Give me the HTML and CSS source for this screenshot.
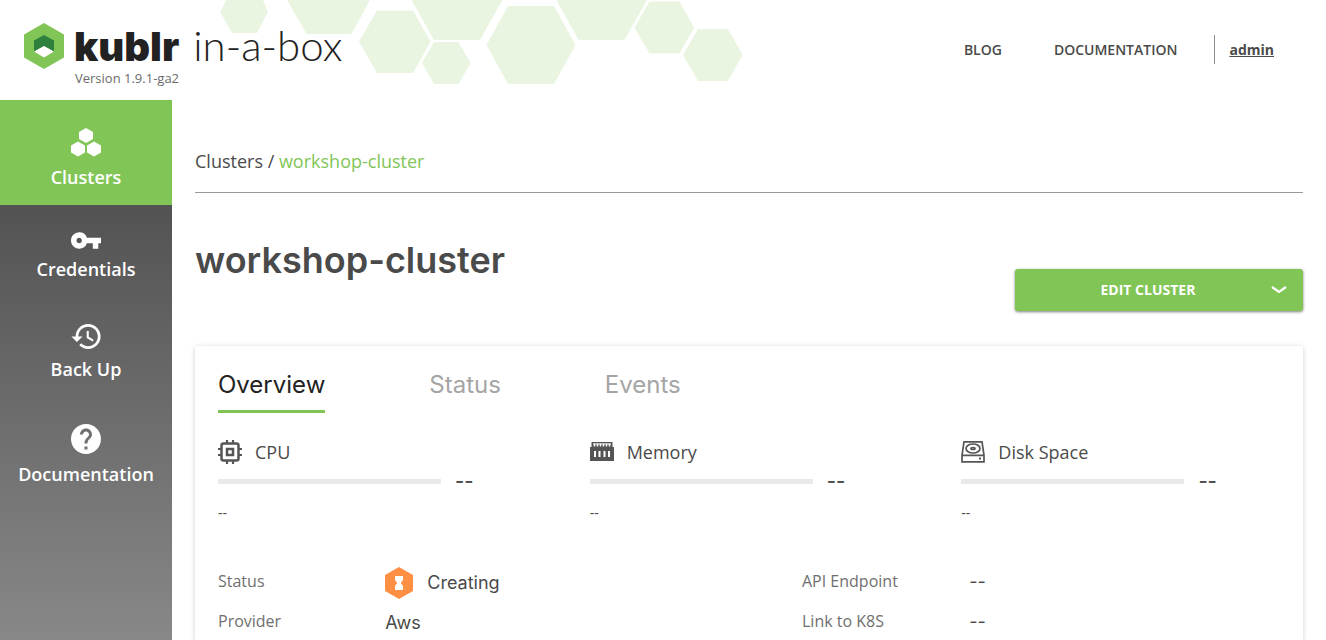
FILE: index.html
```html
<!DOCTYPE html>
<html lang="en">
<head>
<meta charset="utf-8">
<meta name="viewport" content="width=device-width, initial-scale=1">
<title>Kublr in-a-box</title>
<link rel="stylesheet" href="styles.css">
</head>
<body>
<header class="header">
  <svg class="header-pattern" width="760" height="100" viewBox="0 0 760 100" aria-hidden="true">
    <path d="M226 0h37l5 12-11 21h-25L220 12zM287 0h83l-18.500 34h-45zM377 10.500h36l17.500 31-17.500 31.500h-36l-18-31.500zM411.500 0h91L480 40h-46zM434 42h24.500l12 21-12 21H434l-12-21zM508 6h46l21.500 39L554 84h-46l-21.500-39zM556.500 0H647l-22.500 40h-46zM649.500 1.500h30l14.500 26-14.500 26h-30l-15-26zM698 29h30l14.500 26L728 81h-30l-15-26z"/>
  </svg>
  <a class="brand" href="#">
    <svg class="brand-mark" width="40" height="46" viewBox="0 0 40 46" aria-hidden="true">
      <path fill="#82c557" d="M20 0l20 11.500v23L20 46 0 34.500v-23z"/>
      <path fill="#2f803d" d="M20 12l10 5.500V29l-10-5.500L10 29V17.500z"/>
      <path fill="#fff" d="M20 23l10 5.500-10 6-10-6z"/>
    </svg>
    <span class="brand-text">
      <span class="brand-line"><span class="brand-name">kublr</span><span class="brand-edition">in-a-box</span></span>
      <span class="version">Version 1.9.1-ga2</span>
    </span>
  </a>
  <nav class="links">
    <a href="#">BLOG</a>
    <a href="#">DOCUMENTATION</a>
    <a class="user" href="#"><span>admin</span></a>
  </nav>
</header>
<div class="layout">
  <nav class="sidebar">
    <a class="side-item active" href="#">
      <svg width="30" height="30" viewBox="0 0 30 30"><path d="M15 1l7 4v7l-7 4-7-4V5zM7 14.500l7 4v7l-7 4-7-4v-7zM23 14.500l7 4v7l-7 4-7-4v-7z"/></svg>
      <span>Clusters</span>
    </a>
    <a class="side-item" href="#">
      <svg width="30" height="17" viewBox="1 6 22 12"><path d="M12.650 10A5.990 5.990 0 0 0 7 6c-3.310 0-6 2.690-6 6s2.690 6 6 6a5.990 5.990 0 0 0 5.650-4H17v4h4v-4h2v-4H12.650zM7 14c-1.100 0-2-.9-2-2s.9-2 2-2 2 .9 2 2-.9 2-2 2z"/></svg>
      <span>Credentials</span>
    </a>
    <a class="side-item" href="#">
      <svg width="30" height="25" viewBox="1 3 21 18"><path d="M13 3a9 9 0 0 0-9 9H1l3.890 3.890.07.14L9 12H6c0-3.870 3.130-7 7-7s7 3.130 7 7-3.130 7-7 7c-1.930 0-3.680-.79-4.940-2.060l-1.420 1.420A8.950 8.950 0 0 0 13 21a9 9 0 0 0 0-18zm-1 5v5l4.280 2.540.72-1.210-3.500-2.080V8H12z"/></svg>
      <span>Back Up</span>
    </a>
    <a class="side-item" href="#">
      <svg width="30" height="30" viewBox="2 2 20 20"><path d="M12 2C6.480 2 2 6.480 2 12s4.480 10 10 10 10-4.480 10-10S17.520 2 12 2zm1 17h-2v-2h2v2zm2.070-7.750l-.9.920C13.450 12.900 13 13.500 13 15h-2v-.5c0-1.100.45-2.100 1.170-2.830l1.240-1.260c.37-.36.59-.86.59-1.410 0-1.100-.9-2-2-2s-2 .9-2 2H8c0-2.210 1.790-4 4-4s4 1.790 4 4c0 .88-.36 1.680-.93 2.250z"/></svg>
      <span>Documentation</span>
    </a>
  </nav>
  <main class="main">
    <nav class="breadcrumb"><a href="#">Clusters</a> / <span>workshop-cluster</span></nav>
    <div class="title-row">
      <h1>workshop-cluster</h1>
      <button class="edit" type="button">
        <span>EDIT CLUSTER</span>
        <svg width="16" height="9" viewBox="0 0 16 9" aria-hidden="true"><path d="M1 2l7 5 7-5" fill="none" stroke="#fff" stroke-width="2.200"/></svg>
      </button>
    </div>
    <section class="card">
      <div class="tabs" role="tablist">
        <button class="tab selected" type="button" role="tab" aria-selected="true">Overview</button>
        <button class="tab" type="button" role="tab" aria-selected="false">Status</button>
        <button class="tab" type="button" role="tab" aria-selected="false">Events</button>
      </div>
      <div class="metrics">
        <div class="metric">
          <h2><svg width="24" height="24" viewBox="0 0 24 24" fill="none" stroke="#555"><rect x="3.500" y="3.500" width="17" height="17" rx="2" stroke-width="2.500"/><rect x="9" y="9" width="6" height="6" stroke-width="2.500"/><path stroke-width="2.200" d="M9 0v4M15 0v4M9 20v4M15 20v4M0 9h4M0 15h4M20 9h4M20 15h4"/></svg>CPU</h2>
          <div class="usage"><div class="bar"></div><strong>--</strong></div>
          <p>--</p>
        </div>
        <div class="metric">
          <h2><svg width="24" height="24" viewBox="0 0 24 24"><path fill="#555" d="M1.500 2h21v5H24v14H0V7h1.500z"/><path stroke="#fff" stroke-width="1.500" d="M4.500 3.500v3M7.500 3.500v3M10.500 3.500v3M13.500 3.500v3M16.500 3.500v3M19.500 3.500v3"/><path stroke="#fff" d="M3 4h18"/><path stroke="#fff" stroke-width="2" d="M5 11v6M9.500 11v6M14.500 11v6M19 11v6"/></svg>Memory</h2>
          <div class="usage"><div class="bar"></div><strong>--</strong></div>
          <p>--</p>
        </div>
        <div class="metric">
          <h2><svg width="24" height="24" viewBox="0 0 24 24" fill="none" stroke="#555" stroke-width="1.700"><path d="M3 1.800h18l2 13.500v6.500H1v-6.500zM1 15.300h22"/><ellipse cx="12" cy="8.500" rx="7" ry="4.500"/><ellipse cx="12" cy="8.500" rx="2" ry="1"/><path stroke-width="2" d="M18 18.500h2"/></svg>Disk Space</h2>
          <div class="usage"><div class="bar"></div><strong>--</strong></div>
          <p>--</p>
        </div>
      </div>
      <div class="details">
        <dl>
          <dt>Status</dt>
          <dd class="state"><svg width="28" height="32" viewBox="0 0 28 32" aria-hidden="true"><path fill="#ff8f43" d="M14 0l14 8v16l-14 8-14-8V8z"/><path fill="#fff" d="M10 9h8v4l-2.200 3 2.200 3v4h-8v-4l2.200-3-2.200-3z"/></svg>Creating</dd>
          <dt>Provider</dt>
          <dd>Aws</dd>
        </dl>
        <dl class="endpoints">
          <dt>API Endpoint</dt>
          <dd>--</dd>
          <dt>Link to K8S</dt>
          <dd>--</dd>
        </dl>
      </div>
    </section>
  </main>
</div>
</body>
</html>
```
FILE: styles.css
```css
* { box-sizing: border-box; }
body {
  display: flex;
  flex-direction: column;
  min-height: 100vh;
  margin: 0;
  background: #fff;
  color: #4a4a4a;
  font-family: "Open Sans", "Noto Sans", sans-serif;
}
a { color: inherit; text-decoration: none; }
button { border: 0; cursor: pointer; }
h1, h2, p, dl, dd { margin: 0; }

.header {
  position: relative;
  display: flex;
  justify-content: space-between;
  align-items: center;
  height: 100px;
  padding: 0 52px 0 24px;
}
.header-pattern {
  position: absolute;
  top: 0;
  left: 0;
  z-index: -1;
  fill: #e9f5e1;
}
.brand { display: flex; gap: 10px; align-items: flex-start; padding-top: 10px; }
.brand-text { display: flex; flex-direction: column; }
.brand-line {
  display: flex;
  gap: 14px;
  align-items: baseline;
  line-height: 45px;
  color: #222;
}
.brand-name { font-family: Inter, sans-serif; font-size: 40px; font-weight: 900; }
.brand-edition { font-family: Lato, sans-serif; font-size: 42px; font-weight: 300; }
.version { padding-left: 1px; font-size: 13px; line-height: 18px; color: #6b6b6b; }

.links {
  display: flex;
  gap: 52px;
  align-items: center;
  padding-bottom: 2px;
  font-size: 14px;
  font-weight: 600;
}
.user {
  margin-left: -15px;
  padding-left: 14px;
  border-left: 1px solid #8c8c8c;
  line-height: 29px;
  font-weight: 700;
  text-decoration: underline;
}

.layout { display: flex; flex: 1; }
.sidebar {
  flex: 0 0 172px;
  background: linear-gradient(#464646, #888);
  color: #fff;
}
.side-item {
  display: flex;
  flex-direction: column;
  align-items: center;
  gap: 8px;
  padding: 27px 0 16px;
  font-size: 18px;
  font-weight: 600;
  line-height: 24px;
}
.side-item svg { fill: #fff; }
.side-item.active { background: #82c557; }

.main {
  display: flex;
  flex: 1;
  flex-direction: column;
  padding: 45px 23px 0;
}
.breadcrumb {
  padding-bottom: 15px;
  border-bottom: 1px solid #999;
  font-size: 18px;
  line-height: 32px;
}
.breadcrumb span { color: #82c557; }
.title-row {
  display: flex;
  justify-content: space-between;
  align-items: flex-end;
  padding: 46px 0 35px;
}
h1 {
  align-self: flex-start;
  font-family: Inter, sans-serif;
  font-size: 36px;
  font-weight: 600;
  line-height: 42px;
}
.edit {
  display: flex;
  align-items: center;
  width: 26%;
  height: 42px;
  margin-top: 30px;
  padding: 0 16px 2px 10px;
  border-radius: 3px;
  background: #82c557;
  box-shadow: 0 1px 3px rgba(0, 0, 0, .5);
  color: #fff;
  font: 700 14px "Open Sans", sans-serif;
}
.edit span { flex: 1; }

.card {
  flex: 1;
  padding: 20px 23px 0;
  border-radius: 3px 3px 0 0;
  box-shadow: 0 1px 5px rgba(0, 0, 0, .2);
}
.tabs { display: flex; gap: 104px; }
.tab {
  padding: 0 0 6px;
  border-bottom: 3px solid transparent;
  background: none;
  color: #a5a5a5;
  font: 400 24px/38px Inter, sans-serif;
}
.tab.selected { border-color: #82c557; color: #222; }

.metrics {
  display: grid;
  grid-template-columns: repeat(3, 1fr);
  gap: 53px;
  padding-top: 24px;
}
h2 {
  display: flex;
  gap: 13px;
  align-items: center;
  font-size: 18px;
  font-weight: 400;
  line-height: 30px;
}
.usage { display: flex; gap: 14px; align-items: center; height: 28px; }
.bar { width: 70%; height: 5px; background: #e9e9e9; }
.usage strong { font: 500 20px/28px Inter, sans-serif; }
.metric p { font-size: 14px; line-height: 36px; }

.details {
  display: grid;
  grid-template-columns: 1fr 1fr;
  gap: 106px;
  padding-top: 34px;
}
dl {
  display: grid;
  grid-template-columns: 35% 1fr;
  row-gap: 4px;
  align-content: start;
}
dt { color: #6f6f6f; font-size: 16px; line-height: 32px; }
dd { font: 400 18px/36px Inter, sans-serif; }
.state { display: flex; gap: 14px; align-items: center; }
.endpoints { row-gap: 6px; }
.endpoints dd { line-height: 34px; }
```
